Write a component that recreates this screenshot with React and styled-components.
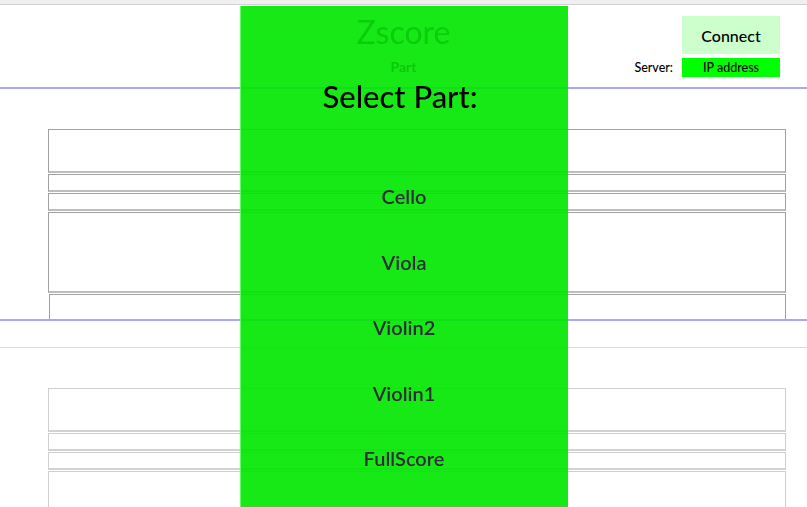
import React from 'react';
import styled, { createGlobalStyle } from 'styled-components';

const GlobalStyle = createGlobalStyle`
  html, body {
    margin: 0;
    padding: 0;
    background: #ffffff;
    font-family: Lato, "Open Sans", sans-serif;
    overflow: hidden;
  }
`;

const PARTS = ['Cello', 'Viola', 'Violin2', 'Violin1', 'FullScore'];

const App = () => {
  return (
    <>
      <GlobalStyle />
      <TopBar />
      <Header>
        <span />
        <TitleBlock>
          <Title>Zscore</Title>
          <SubTitle>Part</SubTitle>
        </TitleBlock>
        <ConnectBlock>
          <ConnectButton type="button">Connect</ConnectButton>
          <ServerRow>
            <ServerLabel>Server:</ServerLabel>
            <IpInput>IP address</IpInput>
          </ServerRow>
        </ConnectBlock>
      </Header>

      <ScoreView>
        <Stave $h={44} />
        <Stave $h={18} />
        <Stave $h={18} />
        <Stave $h={81} />
        <Stave $h={40} $indent />
      </ScoreView>

      <Divider />

      <ScoreView $light>
        <Stave $h={44} $light />
        <Stave $h={18} $light />
        <Stave $h={18} $light />
        <Stave $h={81} $light />
      </ScoreView>

      <Overlay>
        <OverlayTitle>Select Part:</OverlayTitle>
        <PartList>
          {PARTS.map((part) => (
            <PartItem key={part}>{part}</PartItem>
          ))}
        </PartList>
      </Overlay>
    </>
  );
};

const TopBar = styled.div`
  height: 4px;
  background: #efefef;
  border-bottom: 1px solid #d2d2d2;
`;

const Header = styled.header`
  display: grid;
  grid-template-columns: 1fr auto 1fr;
  height: 82px;
`;

const TitleBlock = styled.div`
  display: flex;
  flex-direction: column;
  align-items: center;
  position: relative;
  z-index: 2;
  padding-top: 9px;
`;

const Title = styled.h1`
  margin: 0;
  font-size: 32px;
  line-height: 36px;
  font-weight: normal;
  color: #0ccd0c;
`;

const SubTitle = styled.div`
  margin-top: 9px;
  font-size: 14px;
  line-height: 16px;
  font-weight: bold;
  color: #0bc70b;
`;

const ConnectBlock = styled.div`
  justify-self: end;
  display: flex;
  flex-direction: column;
  align-items: flex-end;
  gap: 4px;
  padding: 11px 27px 0 0;
`;

const ConnectButton = styled.button`
  width: 98px;
  height: 38px;
  border: none;
  background: #ccffcc;
  font-family: Lato, sans-serif;
  font-size: 16px;
  font-weight: 500;
  color: #000;
  padding: 0;
`;

const ServerRow = styled.div`
  display: flex;
  align-items: center;
  gap: 9px;
`;

const ServerLabel = styled.span`
  font-size: 12.5px;
  font-weight: 500;
  color: #000;
`;

const IpInput = styled.div`
  width: 98px;
  height: 19px;
  background: #00ff00;
  font-size: 12.5px;
  font-weight: 500;
  line-height: 19px;
  text-align: center;
  color: #000;
`;

const ScoreView = styled.section`
  box-sizing: border-box;
  padding: 40px 21px 0 48px;
  ${(p) =>
    p.$light
      ? `
    height: 200px;
  `
      : `
    height: 234px;
    overflow: hidden;
    border-top: 2px solid #a6a6ff;
    border-bottom: 2px solid #a6a6ff;
  `}
`;

const Stave = styled.div`
  box-sizing: border-box;
  height: ${(p) => p.$h}px;
  margin: 0 0 1px ${(p) => (p.$indent ? '1px' : '0')};
  background: #fff;
  border: 1px solid ${(p) => (p.$light ? '#cfcfcf' : '#a0a0a0')};
  border-bottom: 2px solid ${(p) => (p.$light ? '#d2d2d2' : '#bdbdbd')};
`;

const Divider = styled.div`
  margin-top: 26px;
  border-top: 1px solid #dcdcdc;
`;

const Overlay = styled.div`
  position: fixed;
  top: 6px;
  bottom: 0;
  left: 50%;
  width: 327px;
  margin-left: -164px;
  z-index: 1;
  background: rgba(0, 231, 0, 0.91);
  border-left: 1px solid rgba(110, 255, 110, 0.9);
  display: flex;
  flex-direction: column;
  align-items: center;
`;

const OverlayTitle = styled.h2`
  margin: 72px 0 0;
  padding-right: 8px;
  font-size: 31px;
  line-height: 36px;
  font-weight: 500;
  color: #000;
`;

const PartList = styled.ul`
  list-style: none;
  margin: 50px 0 0;
  padding: 0;
  display: flex;
  flex-direction: column;
  align-items: center;
`;

const PartItem = styled.li`
  height: 65.5px;
  line-height: 65.5px;
  font-size: 20px;
  font-weight: 600;
  color: #2e2e36;
  cursor: pointer;
`;

export default App;
